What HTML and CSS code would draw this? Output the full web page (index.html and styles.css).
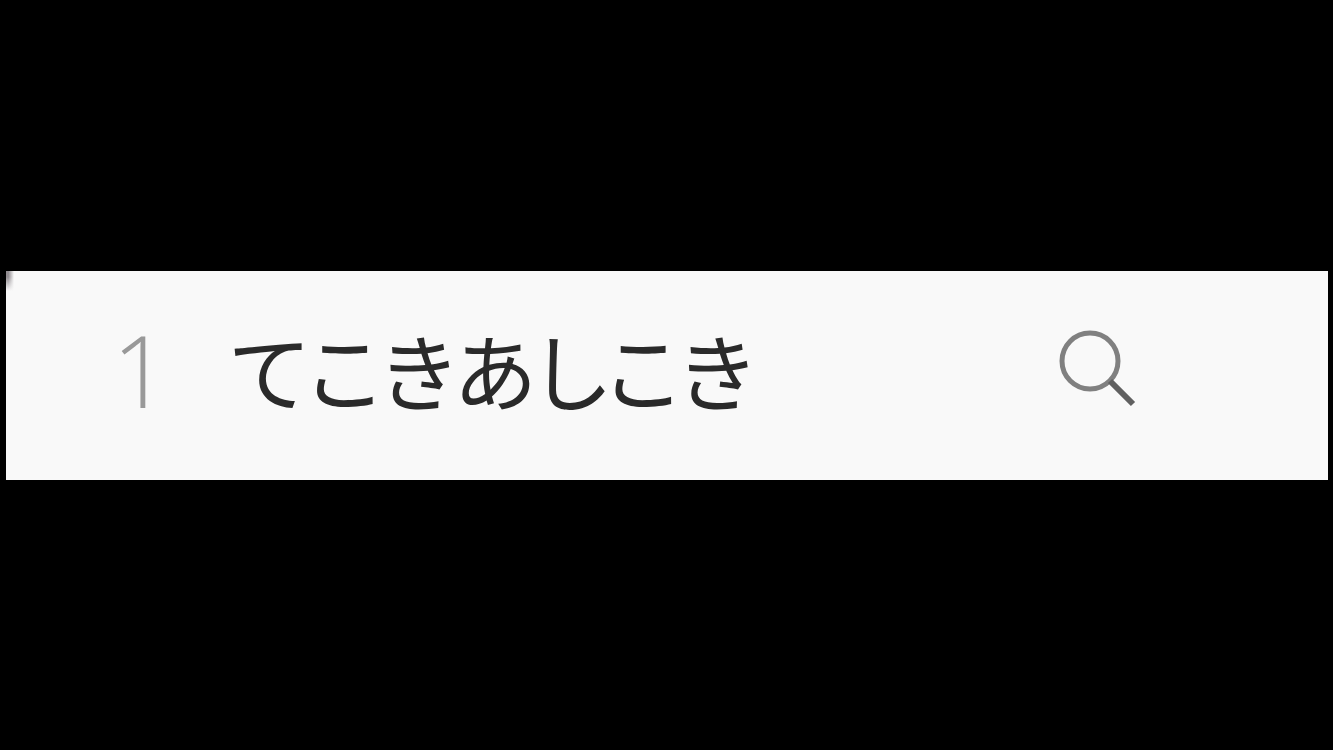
FILE: index.html
```html
<!DOCTYPE html>
<html lang="ja">
<head>
  <meta charset="UTF-8">
  <title>てこきあしこき</title>
  <meta name="viewport" content="width=device-width, initial-scale=1.0">
  <link rel="stylesheet" href="styles.css">
</head>
<body>

  <main class="candidate">
    <span class="candidate-number">1</span>
    <span class="candidate-text">てこきあしこき</span>
    <button class="search-button" type="button" aria-label="検索">
      <svg class="search-icon" viewBox="0 0 80 80" aria-hidden="true">
        <circle cx="34" cy="32" r="28"/>
        <path d="M54 52 L77 75"/>
      </svg>
    </button>
  </main>

</body>
</html>
```

FILE: styles.css
```css
body {
  margin: 0;
  min-height: 100vh;
  display: flex;
  align-items: center;
  background: #000;
}

.candidate {
  flex: 1;
  box-sizing: border-box;
  display: flex;
  align-items: center;
  margin: 0 5px 0 6px;
  padding: 26px 192px 38px 106px;
  min-height: 209px;
  background: #f9f9f9;
  position: relative;
}

/* end of the selection marker at the left edge */
.candidate::before {
  content: "";
  position: absolute;
  top: 0;
  left: 0;
  width: 8px;
  height: 20px;
  background: linear-gradient(to right, transparent 30%, #f9f9f9), linear-gradient(#918c90 30%, #f9f9f9);
}

.candidate-number {
  width: 119px;
  font-family: "Open Sans", "Noto Sans", sans-serif;
  font-size: 100px;
  font-weight: 300;
  line-height: 144px;
  color: #999;
}

.candidate-text {
  font-family: "Noto Sans CJK JP", sans-serif;
  font-size: 84px;
  font-feature-settings: "palt";
  line-height: 144px;
  white-space: nowrap;
  color: #2a2a2a;
}

.search-button {
  margin-left: auto;
  padding: 0;
  border: none;
  background: none;
}

.search-icon {
  display: block;
  width: 80px;
  height: 80px;
  fill: none;
  stroke: #808080;
  stroke-width: 5;
}

.search-icon path {
  stroke: #606060;
  stroke-width: 6;
}
```
